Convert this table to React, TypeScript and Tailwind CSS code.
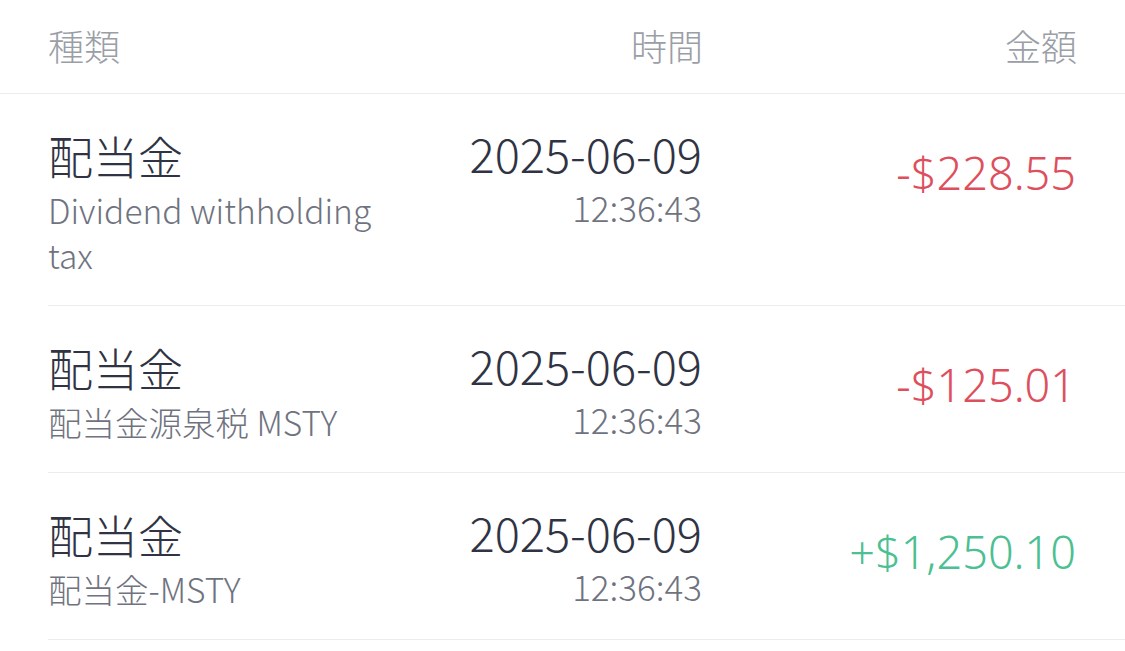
import React from "react";

const rows = [
  { type: "配当金", desc: "Dividend withholding tax", date: "2025-06-09", time: "12:36:43", amount: "-$228.55", positive: false },
  { type: "配当金", desc: "配当金源泉税 MSTY", date: "2025-06-09", time: "12:36:43", amount: "-$125.01", positive: false },
  { type: "配当金", desc: "配当金-MSTY", date: "2025-06-09", time: "12:36:43", amount: "+$1,250.10", positive: true },
];

export default function App() {
  return (
    <div
      className="w-[1125px] h-[651px] bg-white overflow-hidden font-light"
      style={{ fontFamily: '"Noto Sans CJK JP", "Noto Sans", sans-serif' }}
    >
      <div className="h-[94px] border-b border-[#ececec] px-[48px] pb-[4px] grid grid-cols-[342px_1fr_374px] items-center text-[36px] text-[#9a9ea6]">
        <div className="leading-none">種類</div>
        <div className="text-right leading-none">時間</div>
        <div className="text-right leading-none">金額</div>
      </div>
      <div className="pl-[48px]">
        {rows.map((r, i) => (
          <div key={i} className="flex items-start border-b border-[#ececec] pr-[49px] pt-[32px] pb-[28px]">
            <div className="w-[342px] shrink-0">
              <div className="text-[45px] leading-[60px] text-[#2f3343]">{r.type}</div>
              <div className="text-[33.5px] leading-[45px] text-[#6f7380] mt-[1px]">{r.desc}</div>
            </div>
            <div className="flex-1 flex items-center">
              <div className="flex-1 text-right">
                <div className="text-[47px] leading-[54px] text-[#2f3343]">{r.date}</div>
                <div className="text-[35px] leading-[44px] text-[#6f7380] mt-[5px]">{r.time}</div>
              </div>
              <div
                className={`w-[374px] text-right text-[45px] leading-[50px] pb-[10px] ${
                  r.positive ? "text-[#4cbf93]" : "text-[#de4f5d]"
                }`}
                style={{ fontFamily: '"Noto Sans", "Open Sans", sans-serif' }}
              >
                {r.amount}
              </div>
            </div>
          </div>
        ))}
      </div>
    </div>
  );
}
